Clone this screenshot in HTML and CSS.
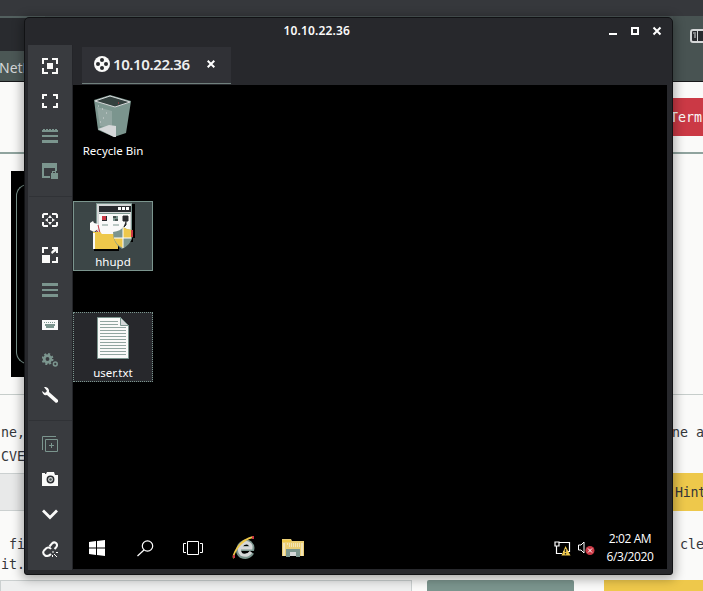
FILE: index.html
```html
<!DOCTYPE html>
<html lang="en">
<head>
<meta charset="utf-8">
<title>10.10.22.36</title>
<link rel="stylesheet" href="styles.css">
</head>
<body>
<div class="page">
  <div class="topbar"></div>
  <div class="browser">
    <div class="browser-left"><div class="url-strip"></div><div class="bookmark">NetH</div></div>
    <div class="browser-right">
      <svg width="18" height="14" viewBox="0 0 18 14"><rect x="1" y="1" width="18" height="12" rx="2" fill="#292b2f" stroke="#d5d7d8" stroke-width="2"/><path d="M7.500 1v12M3 4h3M4 6h2M4 8h2" stroke="#d5d7d8"/></svg>
    </div>
  </div>
  <div class="action-row"><div class="terminate">Term</div></div>
  <div class="media-row"><div class="media"><div class="media-frame"></div></div></div>
  <div class="copy first"><div><p>ne,</p><p>CVE</p></div><p class="right-a">ne a</p></div>
  <div class="answer"><div class="field"></div><div class="hint">Hint</div></div>
  <div class="copy second"><div><p class="fi">fi</p><p>it.</p></div><p class="right-b">cle</p></div>
  <div class="buttons"><div class="field-end"></div><div class="submit"></div><div class="hint-end"></div></div>
</div>

<main class="window">
  <header class="titlebar">
    <h1>10.10.22.36</h1>
    <svg class="controls" width="56" height="12" viewBox="0 0 56 12" fill="none" stroke="#fff" stroke-width="2"><path d="M1 9h8"/><rect x="24" y="3" width="6" height="6"/><path d="M45.500 2.500l7 7M52.500 2.500l-7 7"/></svg>
  </header>
  <div class="content">
    <nav class="tools">
      <svg viewBox="0 0 16 16"><path class="stroke" d="M1 6V1H6M10 1h5V6M15 10v5H10M6 15H1V10"/><path class="fill" d="M5 5h6v6H5z"/></svg>
      <svg viewBox="0 0 16 16"><path class="stroke" d="M1 6V2h4M11 2h4v4M15 10v4h-4M5 14H1v-4"/></svg>
      <svg class="muted" viewBox="0 0 16 16"><path class="fill" d="M0 2h1V1h2v1h1V1h2v1h1V1h2v1h1V1h2v1h1V1h2v1h1v2H0zM0 7h16v2H0zM0 12h16v3H0z"/></svg>
      <svg class="muted" viewBox="0 0 16 16"><path class="fill" fill-rule="evenodd" d="M0 0h15v8h-2V5H2v8h6v2H0zM9 10h1V8h4v2h2v6H9zm2 0h2V9h-2z"/></svg>
      <hr>
      <svg viewBox="0 0 16 16"><path class="stroke" d="M1 6V3l1-1h4M10 2h4l1 1v3M15 10v3l-1 1h-4M6 14H2l-1-1v-3"/><path class="fill" d="M8 3l2 3H6zM8 13l-2-3h4zM3 8l3-2v4zM13 8l-3-2v4z"/></svg>
      <svg viewBox="0 0 16 16"><path class="fill" d="M0 8h8v8H0zM0 0h6v2H2v4H0zM10 14h4v-4h2v6h-6zM10 0h6v6h-2V4l-4 3-1-2 3-3h-2z"/></svg>
      <svg class="muted" viewBox="0 0 16 16"><path class="fill" d="M0 1h16v3H0zM0 7h16v2H0zM0 12h16v3H0z"/></svg>
      <svg viewBox="0 0 16 16"><path class="fill" d="M0 3h16v10H0z"/><path d="M2 5.500h12" stroke="#7b958e" stroke-dasharray="1 1"/><path d="M3 7h10v2h-1v2H4V9H3z" fill="#7b958e"/></svg>
      <svg class="muted" viewBox="0 0 16 16"><circle class="stroke ring" cx="5.500" cy="7" r="3.300"/><circle class="stroke" cx="5.500" cy="7" r="5" stroke-dasharray="2 1.930"/><circle class="stroke small" cx="13.300" cy="12" r="1.900"/></svg>
      <svg viewBox="0 0 16 16"><path class="fill" d="M2 0q4-.500 5 3v2l9 8v2l-2 1-9-8Q1 9 0 4l3 2 2-2z"/></svg>
      <hr>
      <svg class="muted" viewBox="0 0 16 16"><path class="stroke thin" d="M.500 14V.500H14M3.500 3.500h12v12h-12zM7 9.500h5M9.500 7v5"/></svg>
      <svg viewBox="0 0 16 16"><path class="fill" d="M0 4V2h3v1h1l1-2h7l1 3h3v11H0z"/><circle cx="8.500" cy="8.500" r="3.200" fill="#d5d7d8" stroke="#292b2f" stroke-width="1.500"/><circle cx="8.500" cy="8.500" r="1.300" fill="#45514f"/></svg>
      <svg viewBox="0 0 16 16"><path class="stroke chevron" d="M1 4.500l7 7 7-7"/></svg>
      <svg viewBox="0 0 16 16"><path class="stroke" d="M7.500 5.500L10 2.500Q12 .500 14 2q2 2 0 4.500L12.500 8M9 13Q6 16 3 14.500 0 12 2 9.500L4.500 7Q7 5.500 9 8"/><path class="stroke thin" d="M11 10v2M14 11.500h2M12 13l3 3M10.500 14v2"/></svg>
    </nav>
    <section class="session">
      <div class="tabs"><div class="tab">
        <svg width="16" height="16" viewBox="0 0 16 16"><circle cx="8" cy="8" r="8" fill="#fafaf9"/><g fill="#292b2f"><circle cx="8" cy="4" r="2"/><circle cx="12" cy="8" r="2"/><circle cx="8" cy="12" r="2"/><circle cx="4" cy="8" r="2"/></g></svg>
        <span>10.10.22.36</span>
        <svg class="close" width="8" height="8" viewBox="0 0 8 8"><path d="M.700.700l6.600 6.600M7.300.700L.700 7.300" stroke="#fff" stroke-width="2"/></svg>
      </div></div>
      <div class="remote">
        <div class="icons">
          <div class="desk bin">
            <svg width="40" height="44" viewBox="0 0 40 44"><path d="M1 5L17 0l21 6-5 32-12 4-16-7z" fill="#7b958e"/><path d="M2 6L17 1l20 6-15 5z" fill="#34413f" stroke="#d5d7d8"/><path d="M4 12l15 4v17L7 31z" fill="#a5b5b1" opacity=".55"/><path d="M5 34l11-4 7 1v11h-2z" fill="#d5d7d8"/><path d="M5 11h1M9 14h1M13 18h1M10 23h1M7 27h1" stroke="#d5d7d8"/><path d="M25 8h1" stroke="#cb3945"/></svg>
            <span>Recycle Bin</span>
          </div>
          <div class="desk app">
            <svg width="48" height="50" viewBox="0 0 48 50"><path d="M9 1h37v34h-2v4H9z" fill="#000"/><path d="M7 0h36v30H7z" fill="#7b958e"/><path d="M8 1h34v29H8z" fill="#d5d7d8"/><path d="M10 3h32v6H10z" fill="#292b2f"/><path d="M29 4h3v3h-3zM33 4h3v3h-3zM37 4h3v3h-3z" fill="#fff"/><path d="M10 11h31v20H10z" fill="#fafaf9"/><path d="M10 10.500h31M13 22h6M24 22h6" stroke="#7b958e"/><path d="M13 13h5v5h-5z" fill="#292b2f"/><path d="M13 13h4v4h-4z" fill="#cb3945"/><path d="M24 13h5v5h-5z" fill="#45514f"/><path d="M24 15h3v-2h2v3h-3v2h-2z" fill="#7b958e"/><path d="M34 13h5v5h-5zM37 18v4l-3 3" fill="#292b2f" stroke="#292b2f"/><path d="M1 20l3-2 1 2 4 1v5l-4 3-4-2z" fill="#fafaf9"/><path d="M9 22l2 8M7 27l3 3" stroke="#cb3945"/><path d="M5 31h25v17H5z" fill="#000"/><path d="M4 29h7l2 2h16v15H4z" fill="#eec84b"/><path d="M4 30h2v16H4z" fill="#fafaf9"/><path d="M24 29q8-1 10-5 4 3 10 3 1 13-11 19-9-5-9-17z" fill="#7b958e"/><path d="M34 24q4 3 9 3 0 5-1 8h-8zM25 35h9v10q-7-3-9-10z" fill="#eec84b"/><path d="M34 24v21M25 35h17" stroke="#fff"/><path d="M42 27h2v7h-2" fill="#cb3945"/></svg>
            <span>hhupd</span>
          </div>
          <div class="desk text">
            <svg width="32" height="42" viewBox="0 0 32 42"><path d="M.500.500h23l8 8v33H.500z" fill="#fafaf9" stroke="#7b958e"/><path d="M23.500.500v8h8z" fill="#d5d7d8" stroke="#7b958e"/><path d="M3 4.500h18M3 7.500h18M3 10.500h26M3 13.500h26M3 16.500h26M3 19.500h26M3 22.500h26M3 25.500h26M3 28.500h26M3 31.500h26M3 34.500h26M3 37.500h26" stroke="#91a5a0"/></svg>
            <span>user.txt</span>
          </div>
        </div>
        <footer class="taskbar">
          <svg class="win" width="16" height="16" viewBox="0 0 16 16"><path d="M0 2l7-1v6.500H0zM8 1l8-1v7.500H8zM0 8.500h7V15l-7-1zM8 8.500h8V16l-8-1z" fill="#fff"/></svg>
          <svg class="search" width="17" height="17" viewBox="0 0 17 17" fill="none" stroke="#fff" stroke-width="1.200"><circle cx="10.500" cy="6" r="5.200"/><path d="M7 10L.500 16"/></svg>
          <svg class="views" width="20" height="14" viewBox="0 0 20 14" fill="none" stroke="#fff"><path d="M4.500.500h11v13h-11zM3 2.500H.500v9H3M17 2.500h2.500v9H17"/></svg>
          <svg class="ie" width="24" height="24" viewBox="0 0 24 24" fill="none"><path d="M20 16.500q-4 6-11 3-4.500-4-1-10 4.500-5.500 9.500-2.500 3 3 2.500 5.500H8" stroke="#7b958e" stroke-width="4.800"/><path d="M19 16q-4 5-9.500 2.500-4-4-.500-8.500 4-5 8-2.500 2.500 2 2 4.500H8" stroke="#d5d7d8" stroke-width="3"/><path d="M2 22Q0 20 6 11 12 3 21 1" stroke="#eec84b" stroke-width="1.800"/><path d="M1 19h2v3H1zM20 0h2v3h-2z" fill="#cb3945"/></svg>
          <svg class="folder" width="22" height="19" viewBox="0 0 22 19"><path d="M0 0h9l1 2h12v15H0z" fill="#eccf75"/><path d="M0 1h9v2H0z" fill="#eec84b"/><path d="M2 4v13M20 4v13" stroke="#fafaf9"/><path d="M4 18v-8h14v8h-4v-5H8v5z" fill="#7b958e"/><path d="M8 13h6v4H8z" fill="#d5d7d8"/><path d="M5 5h13M7 7h12" stroke="#fafaf9" stroke-dasharray="1 1"/></svg>
          <svg class="network" width="17" height="15" viewBox="0 0 17 15"><path d="M5 1.500h10.500v9H9M1 1h4v4H1zM2.500 5v7.500H8" fill="none" stroke="#fff" stroke-width="1.200"/><path d="M11.500 5l5 9.500h-9z" fill="#eec84b"/><path d="M11.500 8v3M11.500 12v1.500" stroke="#292b2f" stroke-width="1.300"/></svg>
          <svg class="sound" width="17" height="14" viewBox="0 0 17 14"><path d="M.500 4H3l3-3v11L3 9H.500z" fill="none" stroke="#fff"/><circle cx="12" cy="9.500" r="4.500" fill="#cb3945"/><path d="M10 7.500l4 4M14 7.500l-4 4" stroke="#fff"/></svg>
          <div class="clock"><div>2:02 AM</div><div>6/3/2020</div></div>
        </footer>
      </div>
    </section>
  </div>
</main>
</body>
</html>
```
FILE: styles.css
```css
* { box-sizing: border-box; }
body { margin: 0; width: 703px; height: 591px; overflow: hidden; background: #fafaf9; font-family: "Noto Sans", "Open Sans", sans-serif; }
p, h1 { margin: 0; }
svg { display: block; flex: none; }
.page { height: 591px; font: 13.3px/24px "DejaVu Sans Mono", monospace; color: #34363a; }
.topbar { height: 16px; background: #36383c; }
.browser { height: 66px; display: flex; justify-content: space-between; border-bottom: 1px solid #17181a; background: #4c5757; }
.browser-left { width: 45px; }
.url-strip { height: 35px; background: #292b2f; border-top: 2px solid #53605f; }
.bookmark { height: 30px; background: #4b5755; color: #d5d7d8; font: 14px/33px "Noto Sans", sans-serif; margin-left: -1px; }
.browser-right { width: 30px; background: #485352; padding: 13px 0 0 17px; }
.action-row { height: 72px; display: flex; justify-content: flex-end; padding-top: 16px; border-bottom: 2px solid #8fa39e; }
.terminate { width: 33px; height: 38px; background: #cb3945; color: #fafaf9; line-height: 40px; }
.media-row { height: 241px; padding: 17px 0 0 11px; border-bottom: 1px solid #c6cdcb; }
.media { width: 50px; height: 206px; padding: 13px 0 13px 5px; background: #000; }
.media-frame { height: 180px; border: 1px solid #7b958e; border-right: 0; border-radius: 12px 0 0 12px; }
.copy { display: flex; justify-content: space-between; padding-left: 1px; }
.first { height: 78px; padding-top: 26px; }
.right-a { width: 31px; white-space: pre; }
.answer { height: 38px; display: flex; justify-content: space-between; }
.field { width: 50px; background: #e8e9e9; border: 1px solid #cbd0d0; border-left: 0; }
.hint { width: 30px; background: #eec84b; padding-left: 2px; line-height: 40px; letter-spacing: -.3px; }
.second { height: 69px; padding-top: 24px; line-height: 20px; }
.fi { padding-left: 8px; }
.right-b { width: 23px; }
.buttons { height: 11px; display: grid; grid-template-columns: 412px 147px 99px; column-gap: 15px; }
.field-end { background: #eeefef; border: 1px solid #cbd0d0; border-bottom: 0; }
.submit { background: #7b958e; border-radius: 2px 2px 0 0; }
.hint-end { background: #eec84b; margin-left: 15px; margin-right: -15px; }

.window { position: absolute; left: 24px; top: 17px; width: 649px; height: 558px; background: #27282c; border: 1px solid #111214; border-radius: 5px 5px 3px 3px; padding: 0 5px 5px 3px; box-shadow: 0 2px 11px 2px #0005; }
.titlebar { height: 27px; display: flex; justify-content: flex-end; align-items: center; padding: 0 3px 2px 0; }
.titlebar h1 { font: 600 12px/25px "Noto Sans", sans-serif; letter-spacing: .15px; color: #fafaf9; margin-right: 258px; }
.content { display: flex; height: 525px; }
.tools { width: 45px; background: #393b3f; padding-top: 13px; display: flex; flex-direction: column; align-items: center; color: #fafaf9; border-right: 1px solid #242529; }
.tools svg { width: 16px; height: 16px; margin-bottom: 19px; }
.tools hr { width: 43px; height: 1px; border: 0; background: #303236; margin: -2px 0 15px; flex: none; }
.tools .muted { color: #7b958e; }
.fill { fill: currentColor; }
.stroke { fill: none; stroke: currentColor; stroke-width: 2; }
.thin { stroke-width: 1; }
.small { stroke-width: 1.5; }
.ring { stroke-width: 2.8; }
.chevron { stroke-width: 2.8; }
.session { flex: 1; }
.tabs { height: 40px; padding: 2px 0 1px 9px; }
.tab { width: 149px; height: 37px; display: flex; align-items: center; padding: 0 0 2px 12px; background: #303136; border-bottom: 1px solid #70807d; color: #eeefef; }
.tab span { font: 600 15px/20px "Noto Sans", sans-serif; letter-spacing: -.4px; margin-left: 3px; width: 94px; }
.remote { height: 484px; background: #000; display: flex; flex-direction: column; justify-content: space-between; color: #fff; }
.icons { display: flex; flex-direction: column; width: 80px; }
.desk { height: 70px; margin-bottom: 41px; display: flex; flex-direction: column; align-items: center; justify-content: space-between; border: 1px solid transparent; font: 11.5px/15px "Noto Sans", sans-serif; }
.bin { padding: 4px 0 1px; margin-top: 5px; }
.app { background: #3c4647; border-color: #7b958e; padding: 1px 0; }
.text { background: #27282c; border: 1px dotted #7b958e; padding: 4px 0 1px; margin-bottom: 0; }
.taskbar { height: 42px; display: flex; align-items: center; padding-left: 16px; }
.search { margin-left: 32px; }
.views { margin-left: 29px; }
.ie { margin-left: 29px; }
.folder { margin-left: 26px; }
.network { margin-left: 250px; }
.sound { margin-left: 7px; }
.clock { margin-left: 9px; width: 52px; text-align: center; font: 12px/18px "Open Sans", sans-serif; letter-spacing: -.4px; white-space: nowrap; }
```
